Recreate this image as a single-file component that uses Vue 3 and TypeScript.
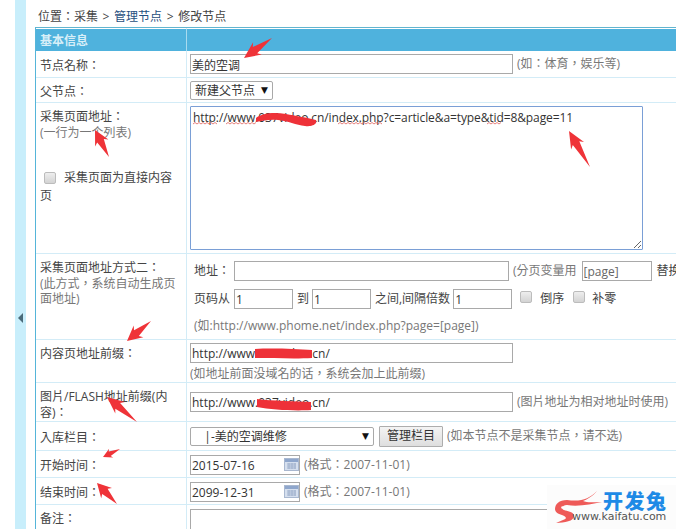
<script setup lang="ts">
type Pt = [number, number]
const arrows: { tip: Pt; tail: Pt }[] = [
  { tip: [244, 58], tail: [272, 38] },
  { tip: [95, 130], tail: [109, 157] },
  { tip: [569, 131], tail: [590, 167] },
  { tip: [127, 341], tail: [151, 321] },
  { tip: [107, 397], tail: [137, 422] },
  { tip: [103, 457], tail: [120, 449] },
  { tip: [97, 483], tail: [117, 504] },
]
function arrowPoints(a: { tip: Pt; tail: Pt }): string {
  const dx = a.tail[0] - a.tip[0]
  const dy = a.tail[1] - a.tip[1]
  const len = Math.hypot(dx, dy)
  const ux = dx / len
  const uy = dy / len
  const nx = -uy
  const ny = ux
  const h = Math.min(len * 0.48, 17)
  const w = Math.min(len * 0.26, 7.5)
  const n = w * 0.5
  const back = h * 0.82
  const pts: Pt[] = [
    a.tip,
    [a.tip[0] + ux * h + nx * w, a.tip[1] + uy * h + ny * w],
    [a.tip[0] + ux * back + nx * n, a.tip[1] + uy * back + ny * n],
    a.tail,
    [a.tip[0] + ux * back - nx * n, a.tip[1] + uy * back - ny * n],
    [a.tip[0] + ux * h - nx * w, a.tip[1] + uy * h - ny * w],
  ]
  return pts.map((p) => p.map((v) => v.toFixed(1)).join(',')).join(' ')
}
function wave(x1: number, x2: number, y: number): string {
  let d = `M${x1} ${y}`
  let up = true
  for (let x = x1 + 2; x <= x2; x += 2) {
    d += ` L${x} ${up ? y - 1.5 : y}`
    up = !up
  }
  return d
}
const waves = [wave(193, 217, 124), wave(226, 256, 124), wave(338, 382, 124), wave(487, 502, 124)]
const dates = [
  { value: '2015-07-16' },
  { value: '2099-12-31' },
]
</script>

<template>
  <div class="page">
    <aside class="strip"><i class="tri"></i></aside>
    <main class="content">
      <div class="crumb">位置：采集 &gt; <a>管理节点</a> &gt; 修改节点</div>
      <table class="form">
        <colgroup>
          <col class="c1" />
          <col />
        </colgroup>
        <thead>
          <tr class="r0">
            <th>基本信息</th>
            <th></th>
          </tr>
        </thead>
        <tbody>
          <tr class="r1">
            <td class="lab mid">节点名称：</td>
            <td class="val">
              <div class="line">
                <input class="inp w323" value="美的空调" />
                <span class="note ml4">(如：体育，娱乐等)</span>
              </div>
            </td>
          </tr>
          <tr class="r2">
            <td class="lab mid">父节点：</td>
            <td class="val">
              <div class="line">
                <span class="selwrap">
                  <select class="sel w83"><option>新建父节点</option></select>
                </span>
              </div>
            </td>
          </tr>
          <tr class="r3">
            <td class="lab">
              <div>采集页面地址：</div>
              <div class="note">(一行为一个列表)</div>
              <div class="direct">
                <input type="checkbox" class="chk" />
                <span class="direct-text">采集页面为直接内容</span>
              </div>
              <div class="direct-end">页</div>
            </td>
            <td class="val top">
              <textarea class="area" spellcheck="false" value="http://www.037video.cn/index.php?c=article&a=type&tid=8&page=11"></textarea>
            </td>
          </tr>
          <tr class="r4">
            <td class="lab">
              <div>采集页面地址方式二：</div>
              <div class="note">(此方式，系统自动生成页面地址)</div>
            </td>
            <td class="val top">
              <div class="line l41">
                <span class="t-addr">地址：</span>
                <input class="inp w275" />
                <span class="note ml4">(分页变量用</span>
                <input class="inp w70 ml5 grayval" value="[page]" />
                <span class="ml5 replace">替换</span>
              </div>
              <div class="line l42">
                <span class="t-from">页码从</span>
                <input class="inp w59" value="1" />
                <span class="ml4 mr">到</span>
                <input class="inp w59" value="1" />
                <span class="ml4">之间,间隔倍数</span>
                <input class="inp w59 ml3" value="1" />
                <input type="checkbox" class="chk up ml8" />
                <span class="ck-lab">倒序</span>
                <input type="checkbox" class="chk up ml9" />
                <span class="ck-lab2">补零</span>
              </div>
              <div class="note l43">(如:http://www.phome.net/index.php?page=[page])</div>
            </td>
          </tr>
          <tr class="r5">
            <td class="lab">内容页地址前缀：</td>
            <td class="val top">
              <input class="inp w323 block" value="http://www.037video.cn/" />
              <div class="note under">(如地址前面没域名的话，系统会加上此前缀)</div>
            </td>
          </tr>
          <tr class="r6">
            <td class="lab">图片/FLASH地址前缀(内容)：</td>
            <td class="val">
              <div class="line">
                <input class="inp w323" value="http://www.037video.cn/" />
                <span class="note ml4">(图片地址为相对地址时使用)</span>
              </div>
            </td>
          </tr>
          <tr class="r7">
            <td class="lab mid">入库栏目：</td>
            <td class="val">
              <div class="line">
                <span class="selwrap">
                  <select class="sel w184"><option>&nbsp;&nbsp;&nbsp;|-美的空调维修</option></select>
                </span>
                <button class="btn">管理栏目</button>
                <span class="note ml4">(如本节点不是采集节点，请不选)</span>
              </div>
            </td>
          </tr>
          <tr v-for="(d, i) in dates" :key="d.value" class="r8">
            <td class="lab mid">{{ i === 0 ? '开始时间：' : '结束时间：' }}</td>
            <td class="val">
              <div class="line">
                <span class="date">
                  <input class="inp w110" :value="d.value" />
                  <svg class="cal" width="15" height="13" viewBox="0 0 15 13">
                    <rect x="0.5" y="0.5" width="14" height="12" fill="#d5dfee" stroke="#a9b8d0" />
                    <rect x="1" y="1" width="13" height="3" fill="#8ea6cc" />
                    <path d="M3 6h9M3 8h9M3 10h9M5 5v6M8 5v6M11 5v6" stroke="#9fb0cc" stroke-width="1" />
                  </svg>
                </span>
                <span class="note ml4">(格式：2007-11-01)</span>
              </div>
            </td>
          </tr>
          <tr class="r10">
            <td class="lab">备注：</td>
            <td class="val top">
              <textarea class="area2" spellcheck="false"></textarea>
            </td>
          </tr>
        </tbody>
      </table>
    </main>

    <svg class="marks" width="676" height="529" viewBox="0 0 676 529">
      <path v-for="(w, i) in waves" :key="i" :d="w" fill="none" stroke="#e0605a" stroke-width="0.8" />
      <path d="M256 118 C262 113 274 112 286 114 C296 116 304 117 316 120 C318 124 312 127 305 126 C296 125 288 121 278 120 C270 119 262 121 256 122 Z" fill="#ee3138" />
      <path d="M255 349 C272 348 296 349 312 350 L312 358 C296 359 272 358 255 358 Z" fill="#ee3138" />
      <path d="M257 399 C272 401 296 401 311 402 L311 410 C296 411 272 410 257 407 Z" fill="#ee3138" />
      <polygon v-for="(a, i) in arrows" :key="'a' + i" :points="arrowPoints(a)" fill="#ef3338" />
    </svg>

    <div class="mark-box">
      <svg class="logo" width="50" height="36" viewBox="0 0 50 36">
        <path d="M44 1 C36 9 28 12 14 10 C6 10 2 14 2 19 C2 22 5 24 9 25 C14 27 14 29 10 30 L3 33 C12 33 22 31 21 25 C20 22 14 21 11 20 C8 19 9 15 14 15 C26 17 38 14 49 12 C42 12 34 13 30 11 C35 9 41 5 44 1 Z" fill="#ee5a58" />
        <circle cx="9.5" cy="17.5" r="1.3" fill="#fff" />
      </svg>
      <div class="cn">开发兔</div>
      <div class="url">www.kaifatu.com</div>
    </div>
  </div>
</template>

<style>
html, body { margin: 0; background: #fff; }
</style>

<style scoped>
.page {
  position: relative;
  width: 676px;
  height: 529px;
  overflow: hidden;
  display: flex;
  background: #fff;
  font: 12px/15.5px "Open Sans", "Noto Sans CJK TC", sans-serif;
  color: #444;
}
.strip {
  flex: none;
  width: 11px;
  margin-left: 15px;
  background: #c8eefb;
  position: relative;
  display: flex;
  align-items: center;
}
.tri {
  width: 0;
  height: 0;
  margin: 107px 0 0 3px;
  border-style: solid;
  border-width: 5px 5px 5px 0;
  border-color: transparent #4a6b7a transparent transparent;
}
.content { flex: none; margin-left: 9px; width: 700px; }
.crumb { height: 27px; box-sizing: border-box; padding: 9px 0 0 3px; line-height: 16px; word-spacing: 1.5px; }
.crumb a { color: #1f4f80; }
.form {
  table-layout: fixed;
  width: 700px;
  border-collapse: separate;
  border-spacing: 0;
  border-top: 1px solid #62b5cf;
  border-left: 1px solid #55b5d9;
}
.c1 { width: 150px; }
th {
  background: #4fb2dd;
  color: #d8eff8;
  font-weight: bold;
  text-align: left;
  padding: 2px 0 0 4px;
  height: 23px;
  box-sizing: border-box;
  border-top: 1px solid #fff;
}
th + th { border-left: 1px solid #a8dbef; }
td {
  box-sizing: border-box;
  padding: 0;
  border-bottom: 1px solid #d3ecf7;
  vertical-align: top;
}
.lab { padding: 6px 4px 0; }
.lab.mid { vertical-align: middle; padding-top: 3px; }
.val { border-left: 1px solid #d3ecf7; padding-left: 3px; vertical-align: middle; }
.val.top { vertical-align: top; }
.r1 td { height: 27px; }
.r2 td { height: 25px; }
.r3 td { height: 151px; }
.r4 td { height: 86px; }
.r5 td { height: 43px; }
.r6 td { height: 39px; }
.r7 td { height: 29px; }
.r8 td { height: 27px; }
.r8 .val { padding-top: 1px; }
.r10 td { height: 40px; }
.note { color: #777; }
.line { display: flex; align-items: center; white-space: nowrap; }
.inp {
  box-sizing: border-box;
  height: 20px;
  border: 1px solid #a9a9a9;
  padding: 1px 1px 0;
  margin: 0;
  font: inherit;
  color: #333;
  background: #fff;
  outline: none;
}
.grayval { color: #666; }
.block { display: block; margin-top: 3px; }
.under { margin-top: 3px; }
.w323 { width: 323px; }
.w275 { width: 275px; }
.w70 { width: 70px; }
.w59 { width: 59px; }
.w110 { width: 110px; }
.w83 { width: 83px; }
.w184 { width: 184px; }
.selwrap { position: relative; display: block; height: 19px; }
.selwrap::after {
  content: "▼";
  position: absolute;
  right: 5px;
  top: 2px;
  font: 9px/14px "DejaVu Sans", sans-serif;
  color: #111;
  pointer-events: none;
}
.sel {
  appearance: none;
  display: block;
  box-sizing: border-box;
  height: 19px;
  border: 1px solid #a9a9a9;
  border-radius: 2px;
  background: #fff;
  font: inherit;
  color: #333;
  padding: 1px 4px 0;
}
.btn {
  box-sizing: border-box;
  width: 64px;
  height: 21px;
  margin-left: 5px;
  padding: 0;
  border: 1px solid #adadad;
  border-radius: 1px;
  background: linear-gradient(#f4f4f4, #dedede);
  font: inherit;
  color: #333;
}
.chk {
  appearance: none;
  box-sizing: border-box;
  width: 12px;
  height: 12px;
  margin: 0;
  flex: none;
  border: 1px solid #bcbcbc;
  border-radius: 2px;
  background: linear-gradient(#eee, #d3d3d3);
}
.chk.up { position: relative; top: -2px; }
.chk.ml8 { margin-left: 8px; }
.chk.ml9 { margin-left: 9px; }
.inp.ml3 { margin-left: 3px; }
.ml4 { margin-left: 4px; }
.inp.ml5, .ml5 { margin-left: 5px; }
.mr { margin-right: 3px; }
.direct { margin-top: 30px; display: flex; align-items: center; padding-left: 4px; }
.direct-text { margin-left: 8px; white-space: nowrap; }
.direct-end { margin-top: 2px; }
.area {
  display: block;
  box-sizing: border-box;
  width: 453px;
  height: 144px;
  margin-top: 3px;
  padding: 3px 2px 1px;
  border: 1px solid #7a9fd6;
  border-radius: 1px;
  font: inherit;
  letter-spacing: -0.1px;
  color: #333;
  outline: none;
}
.area2 {
  display: block;
  box-sizing: border-box;
  width: 453px;
  height: 60px;
  margin-top: 4px;
  border: 1px solid #a9a9a9;
  resize: none;
  outline: none;
}
.l41 { margin-top: 7px; padding-left: 4px; }
.t-addr { width: 40px; }
.l42 { margin-top: 8px; padding-left: 4px; }
.t-from { width: 40px; }
.l43 { margin-top: 9px; padding-left: 4px; white-space: nowrap; }
.ck-lab { margin-left: 8px; }
.ck-lab2 { margin-left: 7px; }
.date { position: relative; display: block; height: 20px; }
.cal { position: absolute; right: 1px; top: 3px; }
.marks { position: absolute; left: 0; top: 0; pointer-events: none; }
.mark-box {
  position: absolute;
  left: 547px;
  top: 485px;
  width: 129px;
  height: 44px;
  background: #fcfcfc;
}
.logo { position: absolute; left: 6px; top: 5px; }
.cn {
  position: absolute;
  left: 56px;
  top: 6px;
  font: 900 20px/20px "Noto Sans CJK SC", sans-serif;
  color: #1e8ae6;
  letter-spacing: 1.5px;
  white-space: nowrap;
}
.url {
  position: absolute;
  left: 25px;
  top: 26px;
  font: 11px/12px "DejaVu Sans", sans-serif;
  color: #555;
  white-space: nowrap;
}
</style>
